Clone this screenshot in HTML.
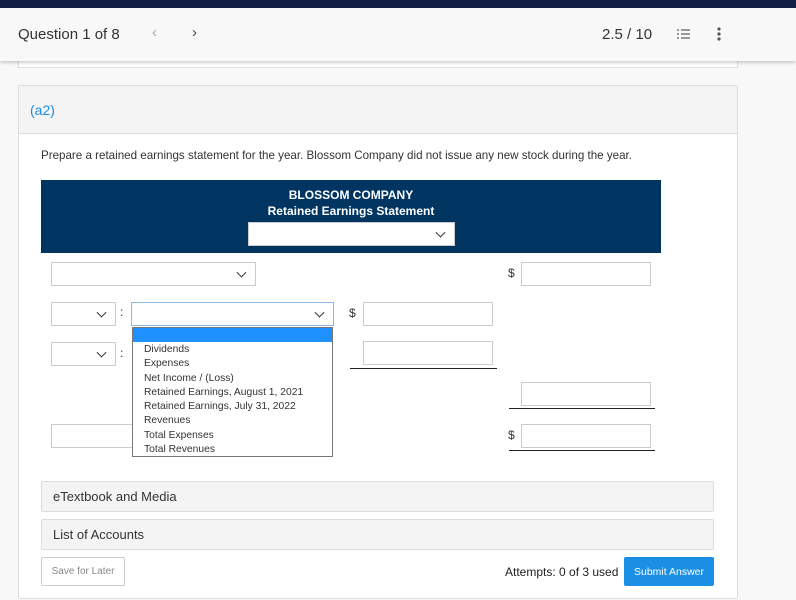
<!DOCTYPE html>
<html><head><style>
*{box-sizing:border-box;margin:0;padding:0}
body{width:796px;height:600px;overflow:hidden;background:#f8f8f8;font-family:"Liberation Sans",sans-serif;position:relative;color:#333}
.a{position:absolute}
.topbar{left:0;top:0;width:796px;height:8px;background:#131f45}
.hdr{left:0;top:8px;width:796px;height:53px;background:#f8f8f8;box-shadow:0 2px 3px rgba(0,0,0,.18);z-index:3}
.sel{position:absolute;background:#fff;border:1px solid #ccc}
.sel:after{content:"";position:absolute;right:10px;top:50%;width:6px;height:6px;border-right:1.6px solid #333;border-bottom:1.6px solid #333;transform:translateY(-70%) rotate(45deg)}
.inp{position:absolute;background:#fff;border:1px solid #ccc}
.line{position:absolute;height:1px;background:#222}
.t{position:absolute;font-size:12px;white-space:nowrap}
</style></head><body>
<div class="a topbar"></div>
<div class="a hdr">
 <div class="t" style="left:18px;top:18px;font-size:15px;color:#333">Question 1 of 8</div>
 <div class="t" style="left:152px;top:16px;font-size:15px;color:#aaa">&lsaquo;</div>
 <div class="t" style="left:192px;top:16px;font-size:15px;color:#444">&rsaquo;</div>
 <div class="t" style="left:602px;top:18px;font-size:15px;color:#333">2.5 / 10</div>
 <svg class="a" style="left:676px;top:19px" width="14" height="14"><g stroke="#666" stroke-width="1.3"><line x1="5" y1="3" x2="14" y2="3"/><line x1="5" y1="7" x2="14" y2="7"/><line x1="5" y1="11" x2="14" y2="11"/><line x1="1" y1="3" x2="3" y2="3"/><line x1="1" y1="7" x2="3" y2="7"/><line x1="1" y1="11" x2="3" y2="11"/></g></svg>
 <svg class="a" style="left:717px;top:18px" width="4" height="16"><circle cx="2" cy="3" r="1.6" fill="#555"/><circle cx="2" cy="8" r="1.6" fill="#555"/><circle cx="2" cy="13" r="1.6" fill="#555"/></svg>
</div>
<div class="a" style="left:18px;top:55px;width:720px;height:13px;background:#fff;border:1px solid #ddd;border-top:none"></div>
<div class="a" style="left:18px;top:85px;width:720px;height:514px;background:#fff;border:1px solid #ddd;border-radius:2px"></div>
<div class="a" style="left:19px;top:86px;width:718px;height:48px;background:#f4f4f4;border-bottom:1px solid #ddd"></div>
<div class="t" style="left:30px;top:102px;font-size:14px;color:#1a8ee0">(a2)</div>
<div class="t" style="left:41px;top:149px;font-size:11.6px;color:#333">Prepare a retained earnings statement for the year. Blossom Company did not issue any new stock during the year.</div>
<div class="a" style="left:41px;top:180px;width:620px;height:73px;background:#003562"></div>
<div class="t" style="left:41px;width:620px;text-align:center;top:188px;color:#fff;font-weight:bold;font-size:12px">BLOSSOM COMPANY</div>
<div class="t" style="left:41px;width:620px;text-align:center;top:204px;color:#fff;font-weight:bold;font-size:12px">Retained Earnings Statement</div>
<div class="sel" style="left:248px;top:222px;width:207px;height:24px"></div>

<div class="sel" style="left:51px;top:262px;width:205px;height:24px"></div>
<div class="t" style="left:508px;top:266px">$</div>
<div class="inp" style="left:521px;top:262px;width:130px;height:24px"></div>

<div class="sel" style="left:51px;top:302px;width:65px;height:24px"></div>
<div class="t" style="left:120px;top:305px">:</div>
<div class="sel" style="left:131px;top:302px;width:203px;height:24px;border-color:#8ab8e8"></div>
<div class="t" style="left:349px;top:306px">$</div>
<div class="inp" style="left:363px;top:302px;width:130px;height:24px"></div>

<div class="sel" style="left:51px;top:342px;width:65px;height:24px"></div>
<div class="t" style="left:120px;top:346px">:</div>
<div class="inp" style="left:363px;top:341px;width:130px;height:24px"></div>
<div class="line" style="left:350px;top:368px;width:147px"></div>

<div class="inp" style="left:521px;top:382px;width:130px;height:24px"></div>
<div class="line" style="left:509px;top:408px;width:146px"></div>

<div class="inp" style="left:51px;top:424px;width:85px;height:24px"></div>
<div class="t" style="left:508px;top:428px">$</div>
<div class="inp" style="left:521px;top:424px;width:130px;height:24px"></div>
<div class="line" style="left:509px;top:450px;width:146px"></div>

<div class="a" style="left:132px;top:327px;width:201px;height:130px;background:#fff;border:1px solid #777;z-index:2">
 <div style="height:14px;background:#1e90ff"></div>
 <div style="padding-left:11px;padding-top:1px;font-size:10.3px;line-height:14.3px;color:#333">Dividends<br>Expenses<br>Net Income / (Loss)<br>Retained Earnings, August 1, 2021<br>Retained Earnings, July 31, 2022<br>Revenues<br>Total Expenses<br>Total Revenues</div>
</div>

<div class="a" style="left:41px;top:481px;width:673px;height:31px;background:#f4f4f4;border:1px solid #ddd;border-radius:2px"></div>
<div class="t" style="left:53px;top:489px;font-size:13px">eTextbook and Media</div>
<div class="a" style="left:41px;top:519px;width:673px;height:31px;background:#f4f4f4;border:1px solid #ddd;border-radius:2px"></div>
<div class="t" style="left:53px;top:527px;font-size:13px">List of Accounts</div>
<div class="a" style="left:41px;top:557px;width:84px;height:29px;background:#fff;border:1px solid #ccc;border-radius:2px"></div>
<div class="t" style="left:41px;width:84px;text-align:center;top:566px;font-size:10px;color:#888">Save for Later</div>
<div class="t" style="left:505px;top:565px;font-size:12px;color:#222">Attempts: 0 of 3 used</div>
<div class="a" style="left:624px;top:557px;width:90px;height:29px;background:#1a8fe3;border-radius:2px"></div>
<div class="t" style="left:624px;width:90px;text-align:center;top:566px;font-size:10.5px;color:#fff">Submit Answer</div>
</body></html>
